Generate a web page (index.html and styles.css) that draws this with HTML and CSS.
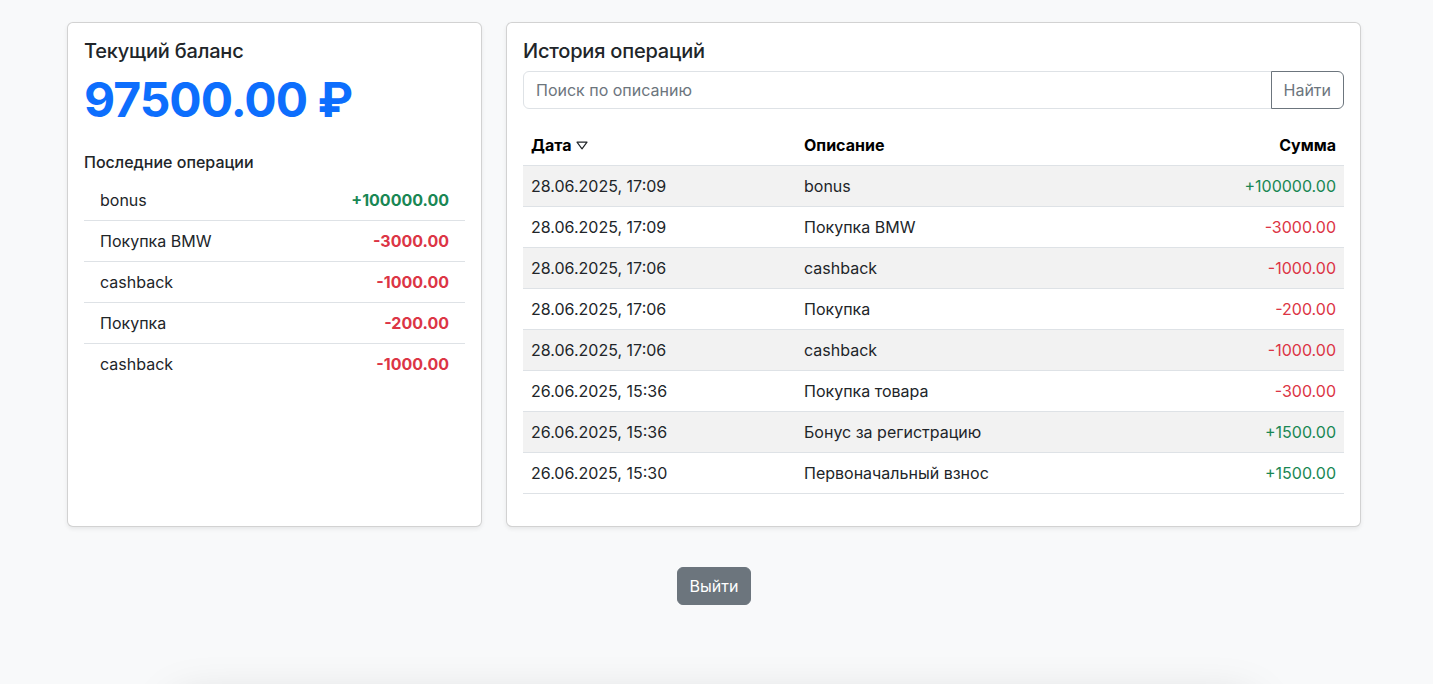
FILE: index.html
```html
<!DOCTYPE html>
<html lang="ru">
<head>
<meta charset="utf-8">
<title>Баланс</title>
<link rel="stylesheet" href="styles.css">
</head>
<body>
<div class="page">
  <div class="row">
    <div class="card card-balance">
      <div class="card-body">
        <h5 class="card-title">Текущий баланс</h5>
        <div class="balance">97500.00 ₽</div>
        <h6 class="subtitle">Последние операции</h6>
        <ul class="list">
          <li class="list-item"><span>bonus</span><span class="amt plus">+100000.00</span></li>
          <li class="list-item"><span>Покупка BMW</span><span class="amt minus">-3000.00</span></li>
          <li class="list-item"><span>cashback</span><span class="amt minus">-1000.00</span></li>
          <li class="list-item"><span>Покупка</span><span class="amt minus">-200.00</span></li>
          <li class="list-item"><span>cashback</span><span class="amt minus">-1000.00</span></li>
        </ul>
      </div>
    </div>
    <div class="card card-history">
      <div class="card-body">
        <h5 class="card-title">История операций</h5>
        <div class="input-group">
          <input class="search" type="text" placeholder="Поиск по описанию">
          <button class="btn-find" type="button">Найти</button>
        </div>
        <table class="table">
          <colgroup><col class="c-date"><col><col class="c-sum"></colgroup>
          <thead>
            <tr>
              <th><span class="sort">Дата <svg class="tri" width="12" height="9" viewBox="0 0 12 9"><path d="M1 1.2 H11 L6 7.8 Z" fill="none" stroke="#212529" stroke-width="1.2" stroke-linejoin="round"/></svg></span></th>
              <th>Описание</th>
              <th class="r">Сумма</th>
            </tr>
          </thead>
          <tbody>
            <tr><td>28.06.2025, 17:09</td><td>bonus</td><td class="r plus">+100000.00</td></tr>
            <tr><td>28.06.2025, 17:09</td><td>Покупка BMW</td><td class="r minus">-3000.00</td></tr>
            <tr><td>28.06.2025, 17:06</td><td>cashback</td><td class="r minus">-1000.00</td></tr>
            <tr><td>28.06.2025, 17:06</td><td>Покупка</td><td class="r minus">-200.00</td></tr>
            <tr><td>28.06.2025, 17:06</td><td>cashback</td><td class="r minus">-1000.00</td></tr>
            <tr><td>26.06.2025, 15:36</td><td>Покупка товара</td><td class="r minus">-300.00</td></tr>
            <tr><td>26.06.2025, 15:36</td><td>Бонус за регистрацию</td><td class="r plus">+1500.00</td></tr>
            <tr><td>26.06.2025, 15:30</td><td>Первоначальный взнос</td><td class="r plus">+1500.00</td></tr>
          </tbody>
        </table>
      </div>
    </div>
  </div>
  <div class="actions">
    <button class="btn-logout" type="button">Выйти</button>
  </div>
  <div class="below"></div>
</div>
</body>
</html>
```

FILE: styles.css
```css
html { overflow: hidden; }
* { box-sizing: border-box; }
body {
  margin: 0;
  background: #f8f9fa;
  color: #212529;
  font-family: Inter, "Noto Sans", "Liberation Sans", sans-serif;
  font-size: 16px;
  line-height: 1.5;
}
.page {
  width: 1294px;
  margin-left: 67px;
  padding-top: 22px;
}
.row {
  display: flex;
  gap: 24px;
  align-items: stretch;
}
.card {
  background: #fff;
  border: 1px solid rgba(0,0,0,.175);
  border-radius: 6px;
  box-shadow: 0 2px 4px rgba(0,0,0,.075);
}
.card-balance { width: 415px; }
.card-history { width: 855px; }
.card-body { padding: 16px; }
.card-title {
  margin: 0 0 8px;
  font-size: 20px;
  font-weight: 500;
  line-height: 1.2;
  letter-spacing: -0.2px;
}
.balance {
  color: #0d6efd;
  font-size: 48px;
  font-weight: 700;
  line-height: 1.2;
  margin-bottom: 24px;
  letter-spacing: -1px;
}
.subtitle {
  margin: 0 0 8px;
  font-size: 16px;
  font-weight: 500;
  line-height: 1.2;
}
.list { list-style: none; margin: 0; padding: 0; }
.list-item {
  display: flex;
  justify-content: space-between;
  padding: 8px 16px;
  border-bottom: 1px solid #dee2e6;
}
.list-item:last-child { border-bottom: 0; }
.amt { font-weight: 700; }
.plus { color: #198754; }
.minus { color: #dc3545; }
.input-group {
  display: flex;
  margin-bottom: 16px;
}
.search {
  flex: 1;
  height: 38px;
  padding: 6px 12px;
  border: 1px solid #dee2e6;
  border-radius: 6px 0 0 6px;
  font: inherit;
  color: #212529;
  background: #fff;
  outline: none;
}
.search::placeholder { color: #6c757d; opacity: 1; }
.btn-find {
  height: 38px;
  padding: 6px 12px;
  margin-left: -1px;
  border: 1px solid #6c757d;
  border-radius: 0 6px 6px 0;
  background: transparent;
  color: #6c757d;
  font: inherit;
}
.table {
  width: 100%;
  border-collapse: collapse;
  table-layout: fixed;
  margin-bottom: 16px;
}
.c-date { width: 273px; }
.c-sum { width: 260px; }
.table th, .table td {
  padding: 8px;
  border-bottom: 1px solid #dee2e6;
  text-align: left;
  white-space: nowrap;
}
.table th { font-weight: 700; color: #000; }
.table .r { text-align: right; }
.table tbody tr:nth-child(odd) td { background: #f2f2f2; }
.sort { display: inline-flex; align-items: center; gap: 5px; }
.tri { display: block; }
.actions {
  display: flex;
  justify-content: center;
  margin-top: 40px;
}
.btn-logout {
  height: 38px;
  padding: 6px 12px;
  border: 1px solid #6c757d;
  border-radius: 6px;
  background: #6c757d;
  color: #fff;
  font: inherit;
}
.below {
  width: 1076px;
  height: 200px;
  margin: 82px auto 0;
  background: #f8f9fa;
  box-shadow: 0 16px 48px rgba(0,0,0,.175);
  border-radius: 6px;
}
```
